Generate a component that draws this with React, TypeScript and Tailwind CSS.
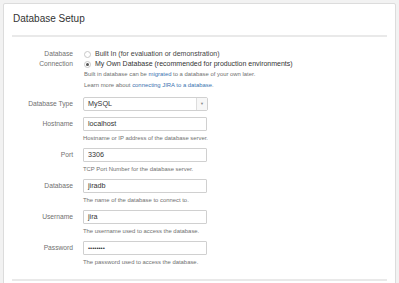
import React from "react";

const fields = [
  { label: "Hostname", value: "localhost", help: "Hostname or IP address of the database server." },
  { label: "Port", value: "3306", help: "TCP Port Number for the database server." },
  { label: "Database", value: "jiradb", help: "The name of the database to connect to." },
  { label: "Username", value: "jira", help: "The username used to access the database." },
  { label: "Password", value: "••••••••", help: "The password used to access the database.", password: true },
];

function Radio({ checked }: { checked?: boolean }) {
  return (
    <span className="flex h-[7px] w-[7px] items-center justify-center rounded-full border border-[#c8c8c8] bg-white">
      {checked && <span className="h-[3px] w-[3px] rounded-full bg-[#555]" />}
    </span>
  );
}

export default function App() {
  return (
    <div className="h-[283px] w-[399px] overflow-hidden bg-[#f2f2f2] pl-[3px] pr-[3px] pt-[3px] font-['Liberation_Sans',Arial,sans-serif]">
      <div className="h-[300px] rounded-[2px] border border-[#dcdcdc] bg-white">
        {/* Header */}
        <div className="mx-[8px] border-b-2 border-[#e9e9e9] pb-[10px] pl-[1px] pt-[9px] text-[10px] leading-[12px] text-[#333]">
          Database Setup
        </div>

        {/* Form */}
        <div className="pt-[12px]">
          <div className="flex">
            <div className="w-[69px] shrink-0 text-right text-[6.7px] leading-[10px] text-[#707070]">
              Database
              <br />
              Connection
            </div>
            <div className="ml-[11px] text-[#333]">
              <div className="flex h-[10px] items-center gap-[4px] text-[7px]">
                <Radio />
                <span className="text-[#444]">Built In (for evaluation or demonstration)</span>
              </div>
              <div className="flex h-[10px] items-center gap-[4px] text-[7px]">
                <Radio checked />
                <span>My Own Database (recommended for production environments)</span>
              </div>
              <div className="text-[5.9px] leading-[11px] text-[#707070]">
                Built in database can be <span className="text-[#3b73af]">migrated</span> to a database of your own later.
              </div>
              <div className="text-[5.9px] leading-[11px] text-[#707070]">
                Learn more about <span className="text-[#3b73af]">connecting JIRA to a database</span>.
              </div>
            </div>
          </div>

          <div className="mt-[6px] flex items-center">
            <div className="w-[69px] shrink-0 text-right text-[6.7px] text-[#707070]">Database Type</div>
            <div className="ml-[10px] flex h-[14px] w-[125px] items-center rounded-[2px] border border-[#d0d0d0] bg-white">
              <span className="flex-1 pl-[4px] text-[7.2px] text-[#333]">MySQL</span>
              <span className="flex h-full w-[11px] items-center justify-center border-l border-[#ddd] bg-[#f7f7f7] text-[4px] text-[#888]">
                ▼
              </span>
            </div>
          </div>

          <div className="mt-[6px] flex flex-col gap-[6px]">
            {fields.map((f) => (
              <div key={f.label} className="flex">
                <div className="flex h-[14px] w-[69px] shrink-0 items-center justify-end text-[6.7px] text-[#707070]">
                  {f.label}
                </div>
                <div className="ml-[10px]">
                  <div
                    className={
                      "flex h-[14px] w-[124px] items-center rounded-[1px] border border-[#d0d0d0] bg-white pl-[4px] text-[#333] " +
                      (f.password ? "text-[6px]" : "text-[7.2px]")
                    }
                  >
                    {f.value}
                  </div>
                  <div className="mt-[3px] text-[5.9px] leading-[8px] text-[#707070]">{f.help}</div>
                </div>
              </div>
            ))}
          </div>

          <div className="mx-[8px] mt-[13px] border-b-2 border-[#e9e9e9]" />
        </div>
      </div>
    </div>
  );
}
